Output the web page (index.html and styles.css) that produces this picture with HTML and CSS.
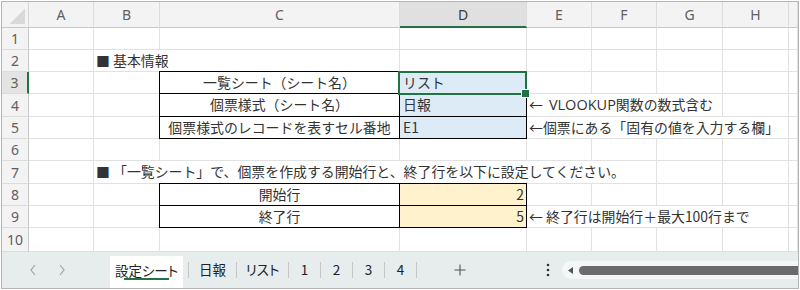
FILE: index.html
```html
<!DOCTYPE html>
<html lang="ja">
<head>
<meta charset="utf-8">
<title>設定シート</title>
<link rel="stylesheet" href="styles.css">
</head>
<body>
<div class="window">
  <div class="sheet">
    <div class="corner"></div>
    <div class="ch">A</div><div class="ch">B</div><div class="ch">C</div><div class="ch sel">D</div><div class="ch">E</div><div class="ch">F</div><div class="ch">G</div><div class="ch">H</div><div class="ch"></div>

    <div class="rh">1</div>
    <div class="c"></div><div class="c"></div><div class="c"></div><div class="c"></div><div class="c"></div><div class="c"></div><div class="c"></div><div class="c"></div><div class="c"></div>

    <div class="rh">2</div>
    <div class="c"></div><div class="c s2 txt">■ 基本情報</div><div class="c"></div><div class="c"></div><div class="c"></div><div class="c"></div><div class="c"></div><div class="c"></div>

    <div class="rh sel">3</div>
    <div class="c"></div><div class="c"></div><div class="c"></div><div class="c"></div><div class="c"></div><div class="c"></div><div class="c"></div>

    <div class="rh">4</div>
    <div class="c"></div><div class="c"></div><div class="c s3 note">←<span class="lat">VLOOKUP</span>関数の数式含む</div><div class="c"></div><div class="c"></div>

    <div class="rh">5</div>
    <div class="c"></div><div class="c"></div><div class="c s4 note">←個票にある「固有の値を入力する欄」</div><div class="c"></div>

    <div class="rh">6</div>
    <div class="c"></div><div class="c"></div><div class="c"></div><div class="c"></div><div class="c"></div><div class="c"></div><div class="c"></div><div class="c"></div><div class="c"></div>

    <div class="rh">7</div>
    <div class="c"></div><div class="c s5 txt">■ 「一覧シート」で、個票を作成する開始行と、終了行を以下に設定してください。</div><div class="c"></div><div class="c"></div><div class="c"></div>

    <div class="rh">8</div>
    <div class="c"></div><div class="c"></div><div class="c"></div><div class="c"></div><div class="c"></div><div class="c"></div><div class="c"></div>

    <div class="rh">9</div>
    <div class="c"></div><div class="c"></div><div class="c s4 note">← 終了行は開始行＋最大100行まで</div><div class="c"></div>

    <div class="rh">10</div>
    <div class="c"></div><div class="c"></div><div class="c"></div><div class="c"></div><div class="c"></div><div class="c"></div><div class="c"></div><div class="c"></div><div class="c"></div>

    <div class="tbl tbl-info">
      <div class="t lbl">一覧シート（シート名）</div><div class="t val active">リスト</div>
      <div class="t lbl">個票様式（シート名）</div><div class="t val">日報</div>
      <div class="t lbl">個票様式のレコードを表すセル番地</div><div class="t val">E1</div>
    </div>
    <div class="tbl tbl-range">
      <div class="t lbl">開始行</div><div class="t num">2</div>
      <div class="t lbl">終了行</div><div class="t num">5</div>
    </div>
  </div>

  <div class="tabbar">
    <div class="nav">
      <svg width="8" height="12" viewBox="0 0 8 12"><polyline points="6,1 2,6 6,11" fill="none" stroke="#a3a3a3" stroke-width="1.2"/></svg>
      <svg width="8" height="12" viewBox="0 0 8 12"><polyline points="2,1 6,6 2,11" fill="none" stroke="#a3a3a3" stroke-width="1.2"/></svg>
    </div>
    <div class="tab active"><span class="tab-label">設定シート</span><span class="tab-bar"></span></div>
    <div class="sep first"></div>
    <div class="tab w47">日報</div>
    <div class="sep"></div>
    <div class="tab w51">リスト</div>
    <div class="sep"></div>
    <div class="tab w31">1</div>
    <div class="sep"></div>
    <div class="tab w31">2</div>
    <div class="sep"></div>
    <div class="tab w31">3</div>
    <div class="sep"></div>
    <div class="tab w31">4</div>
    <div class="sep"></div>
    <div class="plus">
      <svg width="12" height="12" viewBox="0 0 12 12"><path d="M6 0.5V11.5M0.5 6H11.5" stroke="#555" stroke-width="1.1" fill="none"/></svg>
    </div>
    <div class="more">
      <svg width="4" height="14" viewBox="0 0 4 14"><circle cx="2" cy="2" r="1.3" fill="#333"/><circle cx="2" cy="7" r="1.3" fill="#333"/><circle cx="2" cy="12" r="1.3" fill="#333"/></svg>
    </div>
    <div class="scroll">
      <svg width="5" height="7" viewBox="0 0 5 7"><polygon points="5,0 0,3.5 5,7" fill="#555"/></svg>
      <div class="thumb"></div>
    </div>
  </div>
</div>
</body>
</html>
```
FILE: styles.css
```css
* { box-sizing: border-box; margin: 0; padding: 0; }

body {
  margin: 0;
  background: #ffffff;
  font-family: "Noto Sans CJK JP", "Noto Sans", sans-serif;
}

.window {
  margin: 1px 0 0 1px;
  width: 798px;
  height: 288px;
  border: 1px solid #b4b4b4;
  display: flex;
  flex-direction: column;
  background: #ffffff;
  overflow: hidden;
}

.sheet {
  display: grid;
  grid-template-columns: 27px 65px 66px 240px 127px 65px 65px 66px 66px 1fr;
  grid-template-rows: 26px 22px 22px 22px 23px 22px 22px 23px 22px 22px 24px;
}

.corner {
  background-color: #f3f3f3;
  background-image: linear-gradient(to bottom right, transparent 50%, #d9d9d9 50%);
  background-size: 15px 15px;
  background-position: right 3px bottom 3px;
  background-repeat: no-repeat;
  border-right: 1px solid #d6d6d6;
  border-bottom: 1px solid #c8c8c8;
}

.ch {
  background: #f3f3f3;
  border-right: 1px solid #dcdcdc;
  border-bottom: 1px solid #c8c8c8;
  display: flex;
  align-items: center;
  justify-content: center;
  font-family: "Noto Sans", sans-serif;
  font-size: 14px;
  color: #606060;
}

.ch.sel {
  background: #e0e0e0;
  border-bottom: 2px solid #217346;
  color: #3a3a3a;
}

.rh {
  background: #f3f3f3;
  border-right: 1px solid #c8c8c8;
  border-bottom: 1px solid #dcdcdc;
  display: flex;
  align-items: center;
  justify-content: center;
  font-family: "Noto Sans", sans-serif;
  font-size: 14px;
  color: #606060;
}

.rh.sel {
  background: #e4e4e4;
  border-right: 2px solid #217346;
}

.c {
  border-right: 1px solid #e1e1e1;
  border-bottom: 1px solid #e1e1e1;
  display: flex;
  align-items: center;
  white-space: nowrap;
  font-size: 13.9px;
  line-height: 1;
  color: #333333;
}

.s2 { grid-column: span 2; }
.s3 { grid-column: span 3; }
.s4 { grid-column: span 4; }
.s5 { grid-column: span 5; }

.txt { padding-left: 2px; }
.note { padding-left: 2px; }

.lat {
  margin-left: 6px;
  font-family: "Open Sans", sans-serif;
  font-size: 14.5px;
}

.tbl {
  margin: -1px 0 0 -1px;
  border-top: 1px solid #000;
  border-left: 1px solid #000;
  display: grid;
  grid-template-columns: 240px 1fr;
}

.tbl-info {
  grid-column: 4 / 6;
  grid-row: 4 / 7;
  grid-template-rows: 22px 23px 1fr;
}

.tbl-range {
  grid-column: 4 / 6;
  grid-row: 9 / 11;
  grid-template-rows: 22px 1fr;
}

.t {
  border-right: 1px solid #000;
  border-bottom: 1px solid #000;
  display: flex;
  align-items: center;
  white-space: nowrap;
  font-size: 13.9px;
  line-height: 1;
  color: #333333;
}

.t.lbl { justify-content: center; }
.t.val { background: #ddebf7; padding-left: 3px; }
.t.num { background: #fff2cc; justify-content: flex-end; padding-right: 2px; }

.t.active { position: relative; }
.t.active::after {
  content: "";
  position: absolute;
  left: -2px;
  top: -1px;
  right: -1px;
  bottom: -2px;
  border: 2px solid #217346;
}
.t.active::before {
  content: "";
  position: absolute;
  right: -4px;
  bottom: -5px;
  width: 7px;
  height: 7px;
  background: #217346;
  border: 1px solid #ffffff;
  z-index: 2;
}

.tabbar {
  flex: 1;
  display: flex;
  align-items: center;
  background: #e7eded;
  font-family: "Noto Sans CJK JP", sans-serif;
  font-size: 13.5px;
  font-feature-settings: "palt";
  color: #222;
}

.nav {
  width: 108px;
  align-self: stretch;
  display: flex;
  align-items: center;
  padding-left: 27px;
  gap: 21px;
}

.tab {
  display: flex;
  align-items: center;
  justify-content: center;
  line-height: 1;
}

.tab.active {
  width: 73px;
  align-self: stretch;
  margin-top: 4px;
  background: #ffffff;
  flex-direction: column;
  justify-content: flex-start;
  padding-top: 7px;
}

.tab-label { line-height: 14px; }

.tab-bar {
  display: block;
  width: 45px;
  height: 2px;
  margin-top: 1px;
  background: #217346;
}

.w47 { width: 47px; }
.w51 { width: 51px; }
.w31 { width: 31px; }

.sep {
  width: 1px;
  height: 16px;
  background: #c6c6c6;
}
.sep.first { margin-left: 5px; }

.plus {
  width: 86px;
  display: flex;
  justify-content: center;
  align-items: center;
}

.more {
  margin-left: 33px;
  width: 24px;
  display: flex;
  justify-content: center;
  align-items: center;
}

.scroll {
  margin-left: 2px;
  flex: 1;
  height: 18px;
  background: #f4f7f7;
  border-radius: 9px 0 0 9px;
  display: flex;
  align-items: center;
  padding-left: 6px;
}

.thumb {
  margin-left: 6px;
  flex: 1;
  height: 9px;
  background: #6b6b6b;
  border-radius: 5px 0 0 5px;
}
```
